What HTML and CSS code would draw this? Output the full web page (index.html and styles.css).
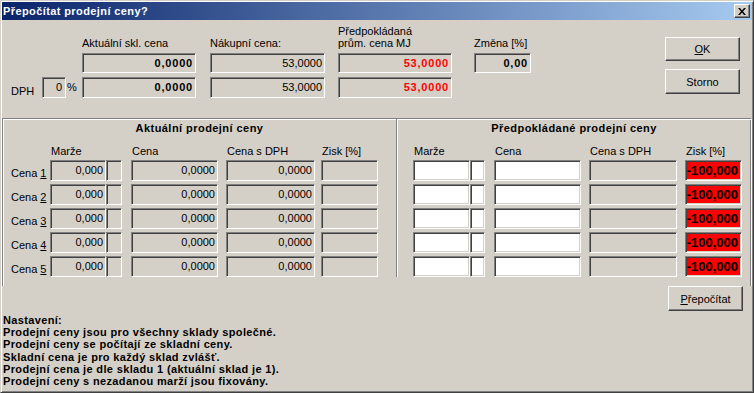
FILE: index.html
```html
<!DOCTYPE html>
<html lang="cs">
<head>
<meta charset="utf-8">
<title>Přepočítat prodejní ceny?</title>
<link rel="stylesheet" href="styles.css">
</head>
<body>
<div class="window">
  <div class="titlebar">
    <span class="title">Přepočítat prodejní ceny?</span>
    <button class="btn close" aria-label="Zavřít"><svg width="8" height="7" viewBox="0 0 8 7"><path d="M0 0h2l2 2.4L6 0h2L5 3.5 8 7H6L4 4.6 2 7H0l3-3.5z" fill="#000"/></svg></button>
  </div>
  <div class="content">
    <div class="top">
      <div class="lbl col4">Aktuální skl. cena</div>
      <div class="lbl col6">Nákupní cena:</div>
      <div class="lbl col8">Předpokládaná<br>prům. cena MJ</div>
      <div class="lbl col10">Změna [%]</div>

      <div class="field val-bold col4 row2">0,0000</div>
      <div class="field col6 row2">53,0000</div>
      <div class="field val-bold red-text col8 row2">53,0000</div>
      <div class="field val-bold col10 row2">0,00</div>

      <div class="dph-lbl">DPH</div>
      <div class="field dph-box">0</div>
      <div class="pct">%</div>
      <div class="field val-bold col4 row3">0,0000</div>
      <div class="field col6 row3">53,0000</div>
      <div class="field val-bold red-text col8 row3">53,0000</div>

      <div class="buttons">
        <button class="btn dlg-btn ok"><u>O</u>K</button>
        <button class="btn dlg-btn storno">Storno</button>
      </div>
    </div>

    <div class="prices">
      <div class="half half-left">
        <div class="sect-h">Aktuální prodejní ceny</div>
        <div class="grid-left">
          <div class="hl g-m">Marže</div>
          <div class="hl g-c">Cena</div>
          <div class="hl g-cd">Cena s DPH</div>
          <div class="hl g-z">Zisk [%]</div>

          <div class="rl">Cena <u>1</u></div>
          <div class="field g-m">0,000</div><div class="field g-ms"></div>
          <div class="field g-c">0,0000</div><div class="field g-cd">0,0000</div><div class="field g-z"></div>

          <div class="rl">Cena <u>2</u></div>
          <div class="field g-m">0,000</div><div class="field g-ms"></div>
          <div class="field g-c">0,0000</div><div class="field g-cd">0,0000</div><div class="field g-z"></div>

          <div class="rl">Cena <u>3</u></div>
          <div class="field g-m">0,000</div><div class="field g-ms"></div>
          <div class="field g-c">0,0000</div><div class="field g-cd">0,0000</div><div class="field g-z"></div>

          <div class="rl">Cena <u>4</u></div>
          <div class="field g-m">0,000</div><div class="field g-ms"></div>
          <div class="field g-c">0,0000</div><div class="field g-cd">0,0000</div><div class="field g-z"></div>

          <div class="rl">Cena <u>5</u></div>
          <div class="field g-m">0,000</div><div class="field g-ms"></div>
          <div class="field g-c">0,0000</div><div class="field g-cd">0,0000</div><div class="field g-z"></div>
        </div>
      </div>
      <div class="half half-right">
        <div class="sect-h">Předpokládané prodejní ceny</div>
        <div class="grid-right">
          <div class="hl r-m">Marže</div>
          <div class="hl r-c">Cena</div>
          <div class="hl r-cd">Cena s DPH</div>
          <div class="hl r-z">Zisk [%]</div>

          <div class="field white r-m"></div><div class="field white r-ms"></div>
          <div class="field white r-c"></div><div class="field r-cd"></div><div class="field red r-z">-100,000</div>

          <div class="field white r-m"></div><div class="field white r-ms"></div>
          <div class="field white r-c"></div><div class="field r-cd"></div><div class="field red r-z">-100,000</div>

          <div class="field white r-m"></div><div class="field white r-ms"></div>
          <div class="field white r-c"></div><div class="field r-cd"></div><div class="field red r-z">-100,000</div>

          <div class="field white r-m"></div><div class="field white r-ms"></div>
          <div class="field white r-c"></div><div class="field r-cd"></div><div class="field red r-z">-100,000</div>

          <div class="field white r-m"></div><div class="field white r-ms"></div>
          <div class="field white r-c"></div><div class="field r-cd"></div><div class="field red r-z">-100,000</div>
        </div>
      </div>
    </div>

    <div class="recalc-row">
      <button class="btn dlg-btn recalc"><u>P</u>řepočítat</button>
    </div>

    <div class="notes">
      <div>Nastavení:</div>
      <div>Prodejní ceny jsou pro všechny sklady společné.</div>
      <div>Prodejní ceny se počítají ze skladní ceny.</div>
      <div>Skladní cena je pro každý sklad zvlášť.</div>
      <div>Prodejní cena je dle skladu 1 (aktuální sklad je 1).</div>
      <div>Prodejní ceny s nezadanou marží jsou fixovány.</div>
    </div>
  </div>
</div>
</body>
</html>
```

FILE: styles.css
```css
* { box-sizing: border-box; }

html, body {
  margin: 0;
  padding: 0;
}

body {
  width: 754px;
  height: 393px;
  overflow: hidden;
  background: #d4d0c8;
  font-family: "Liberation Sans", Arial, sans-serif;
  font-size: 11px;
  color: #000;
}

.window {
  width: 754px;
  height: 393px;
  background: #d4d0c8;
  border: 1px solid;
  border-color: #d4d0c8 #404040 #404040 #d4d0c8;
  box-shadow: inset 1px 1px #fff, inset -1px -1px #808080;
  padding: 1px;
  display: flex;
  flex-direction: column;
}

/* title bar */
.titlebar {
  height: 18px;
  flex: none;
  display: flex;
  align-items: center;
  padding-left: 1px;
  background: linear-gradient(to right, #0a246a, #a6caf0);
  color: #fff;
}

.title {
  font-weight: bold;
  line-height: 18px;
  letter-spacing: 0.4px;
  white-space: nowrap;
}

.btn {
  background: #d4d0c8;
  border: 1px solid;
  border-color: #fff #404040 #404040 #fff;
  box-shadow: inset -1px -1px #808080;
  font: inherit;
  color: #000;
  padding: 0;
  margin: 0;
}

.close {
  margin-left: auto;
  margin-right: 2px;
  width: 16px;
  height: 14px;
  display: flex;
  align-items: center;
  justify-content: center;
}

.close svg { display: block; }

.content {
  flex: 1;
  display: flex;
  flex-direction: column;
}

/* sunken edit field */
.field {
  border: 1px solid;
  border-color: #808080 #fff #fff #808080;
  box-shadow: inset 1px 1px #404040, inset -1px -1px #d4d0c8;
  text-align: right;
  padding-right: 2px;
  white-space: nowrap;
  overflow: hidden;
  background: #d4d0c8;
}

.field.white { background: #fff; }

.field.red {
  background: #ff0000;
  font-weight: bold;
  font-size: 13px;
  line-height: 19px;
  padding-right: 3px;
}

.val-bold {
  font-weight: bold;
  letter-spacing: 0.8px;
}

.red-text { color: #ff0000; }

/* top area */
.top {
  display: grid;
  grid-template-columns: 31px 24px 16px 114px 14px 115px 13px 114px 22px 57px 134px 75px;
  grid-template-rows: 29px 20px 21px;
  row-gap: 4px;
  padding-left: 9px;
}

.top .field { line-height: 18px; }
.top .row3 { line-height: 19px; }

.lbl {
  grid-row: 1;
  align-self: end;
  line-height: 12px;
  white-space: nowrap;
}

.col4 { grid-column: 4; }
.col6 { grid-column: 6; }
.col8 { grid-column: 8; }
.col10 { grid-column: 10; }
.row2 { grid-row: 2; }
.row3 { grid-row: 3; }

.dph-lbl {
  grid-column: 1;
  grid-row: 3;
  align-self: end;
  line-height: 12px;
  margin-bottom: 1px;
}

.top .dph-box {
  grid-column: 2;
  grid-row: 3;
  line-height: 19px;
  padding-right: 3px;
}

.pct {
  grid-column: 3;
  grid-row: 3;
  line-height: 20px;
  padding-left: 1px;
}

.buttons {
  grid-column: 12;
  grid-row: 1 / 4;
  align-self: start;
  margin-top: 17px;
  display: flex;
  flex-direction: column;
  gap: 8px;
}

.dlg-btn {
  width: 75px;
  height: 24px;
  text-align: center;
}

.storno { height: 25px; }

/* price panel */
.prices {
  display: flex;
  margin-top: 20px;
  border-top: 1px solid #808080;
  border-left: 1px solid #808080;
  border-right: 1px solid #fff;
  box-shadow: inset 1px 1px #fff, inset -1px 0 #808080;
  padding-bottom: 9px;
}

.half-left { width: 393px; }

.half-right {
  flex: 1;
  border-left: 1px solid #808080;
  box-shadow: inset 1px 0 #fff;
}

.sect-h {
  text-align: center;
  font-weight: bold;
  line-height: 12px;
  margin-top: 3px;
  letter-spacing: 0.45px;
  white-space: nowrap;
}

.grid-left,
.grid-right {
  display: grid;
  grid-template-rows: 12px repeat(5, 21px);
  row-gap: 3px;
  margin-top: 11px;
}

.grid-left {
  grid-template-columns: 39px 56px 16px 9px 87px 8px 89px 6px 57px;
  padding-left: 8px;
}

.grid-right {
  grid-template-columns: 57px 15px 9px 87px 8px 88px 8px 57px;
  padding-left: 16px;
}

.grid-left .field,
.grid-right .field { line-height: 19px; }

.hl {
  line-height: 12px;
  padding-left: 1px;
  white-space: nowrap;
}

.rl {
  grid-column: 1;
  align-self: end;
  line-height: 12px;
  margin-bottom: 2px;
  white-space: nowrap;
}

.g-m { grid-column: 2; }
.g-ms { grid-column: 3; }
.g-c { grid-column: 5; }
.g-cd { grid-column: 7; }
.g-z { grid-column: 9; }

.r-m { grid-column: 1; }
.r-ms { grid-column: 2; }
.r-c { grid-column: 4; }
.r-cd { grid-column: 6; }
.r-z { grid-column: 8; }

.hl.g-m { grid-column: 2 / 4; }
.hl.r-m { grid-column: 1 / 3; }

/* bottom */
.recalc-row {
  display: flex;
  justify-content: flex-end;
  padding-right: 9px;
}

.recalc { height: 25px; }

.notes {
  margin-top: 3px;
  padding-left: 1px;
  font-weight: bold;
  line-height: 12.2px;
  letter-spacing: 0.35px;
  white-space: nowrap;
}
```
